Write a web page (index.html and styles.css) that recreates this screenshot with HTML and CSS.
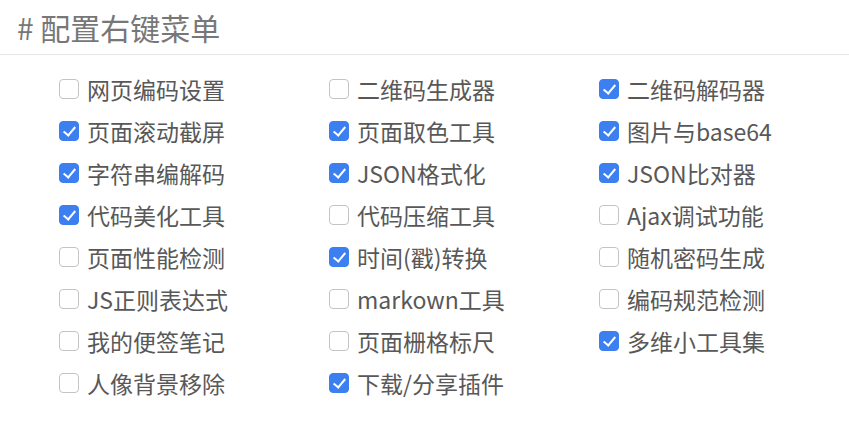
FILE: index.html
```html
<!DOCTYPE html>
<html lang="zh-CN">
<head>
    <meta charset="UTF-8">
    <title>配置右键菜单</title>
    <link rel="stylesheet" href="styles.css">
</head>
<body>
    <h2 class="title"># 配置右键菜单</h2>

    <!-- menu options, 3 columns -->
    <div class="menu-list">
        <label class="item"><input type="checkbox"><span class="box"></span>网页编码设置</label>
        <label class="item"><input type="checkbox"><span class="box"></span>二维码生成器</label>
        <label class="item"><input type="checkbox" checked><span class="box"></span>二维码解码器</label>

        <label class="item"><input type="checkbox" checked><span class="box"></span>页面滚动截屏</label>
        <label class="item"><input type="checkbox" checked><span class="box"></span>页面取色工具</label>
        <label class="item"><input type="checkbox" checked><span class="box"></span>图片与base64</label>

        <label class="item"><input type="checkbox" checked><span class="box"></span>字符串编解码</label>
        <label class="item"><input type="checkbox" checked><span class="box"></span>JSON格式化</label>
        <label class="item"><input type="checkbox" checked><span class="box"></span>JSON比对器</label>

        <label class="item"><input type="checkbox" checked><span class="box"></span>代码美化工具</label>
        <label class="item"><input type="checkbox"><span class="box"></span>代码压缩工具</label>
        <label class="item"><input type="checkbox"><span class="box"></span>Ajax调试功能</label>

        <label class="item"><input type="checkbox"><span class="box"></span>页面性能检测</label>
        <label class="item"><input type="checkbox" checked><span class="box"></span>时间(戳)转换</label>
        <label class="item"><input type="checkbox"><span class="box"></span>随机密码生成</label>

        <label class="item"><input type="checkbox"><span class="box"></span>JS正则表达式</label>
        <label class="item"><input type="checkbox"><span class="box"></span>markown工具</label>
        <label class="item"><input type="checkbox"><span class="box"></span>编码规范检测</label>

        <label class="item"><input type="checkbox"><span class="box"></span>我的便签笔记</label>
        <label class="item"><input type="checkbox"><span class="box"></span>页面栅格标尺</label>
        <label class="item"><input type="checkbox" checked><span class="box"></span>多维小工具集</label>

        <label class="item"><input type="checkbox"><span class="box"></span>人像背景移除</label>
        <label class="item"><input type="checkbox" checked><span class="box"></span>下载/分享插件</label>
    </div>
</body>
</html>
```

FILE: styles.css
```css
body { margin: 0; background: #fff; font-family: "Noto Sans CJK SC", "Noto Sans", sans-serif; color: #555; }
.title { margin: 0; padding: 7px 0 7px 17px; font-size: 30px; line-height: 40px; font-weight: normal; color: #777; border-bottom: 1px solid #e6e6e6; }
.menu-list { display: grid; grid-template-columns: 270px 270px 270px; margin-top: 13px; padding-left: 59px; }
.item { display: flex; align-items: center; height: 42px; font-size: 23px; color: #585858; cursor: pointer; }
.item input { display: none; }
.box { width: 18px; height: 18px; margin-right: 8px; border: 1px solid #c4c4c4; border-radius: 4px; background: #fff; position: relative; flex-shrink: 0; }
.item input:checked + .box { background: #3c7ff0; border-color: #3c7ff0; }
.item input:checked + .box::after { content: ""; position: absolute; left: 6px; top: 2px; width: 5px; height: 10px; border: solid #fff; border-width: 0 2px 2px 0; transform: rotate(40deg); }
```
